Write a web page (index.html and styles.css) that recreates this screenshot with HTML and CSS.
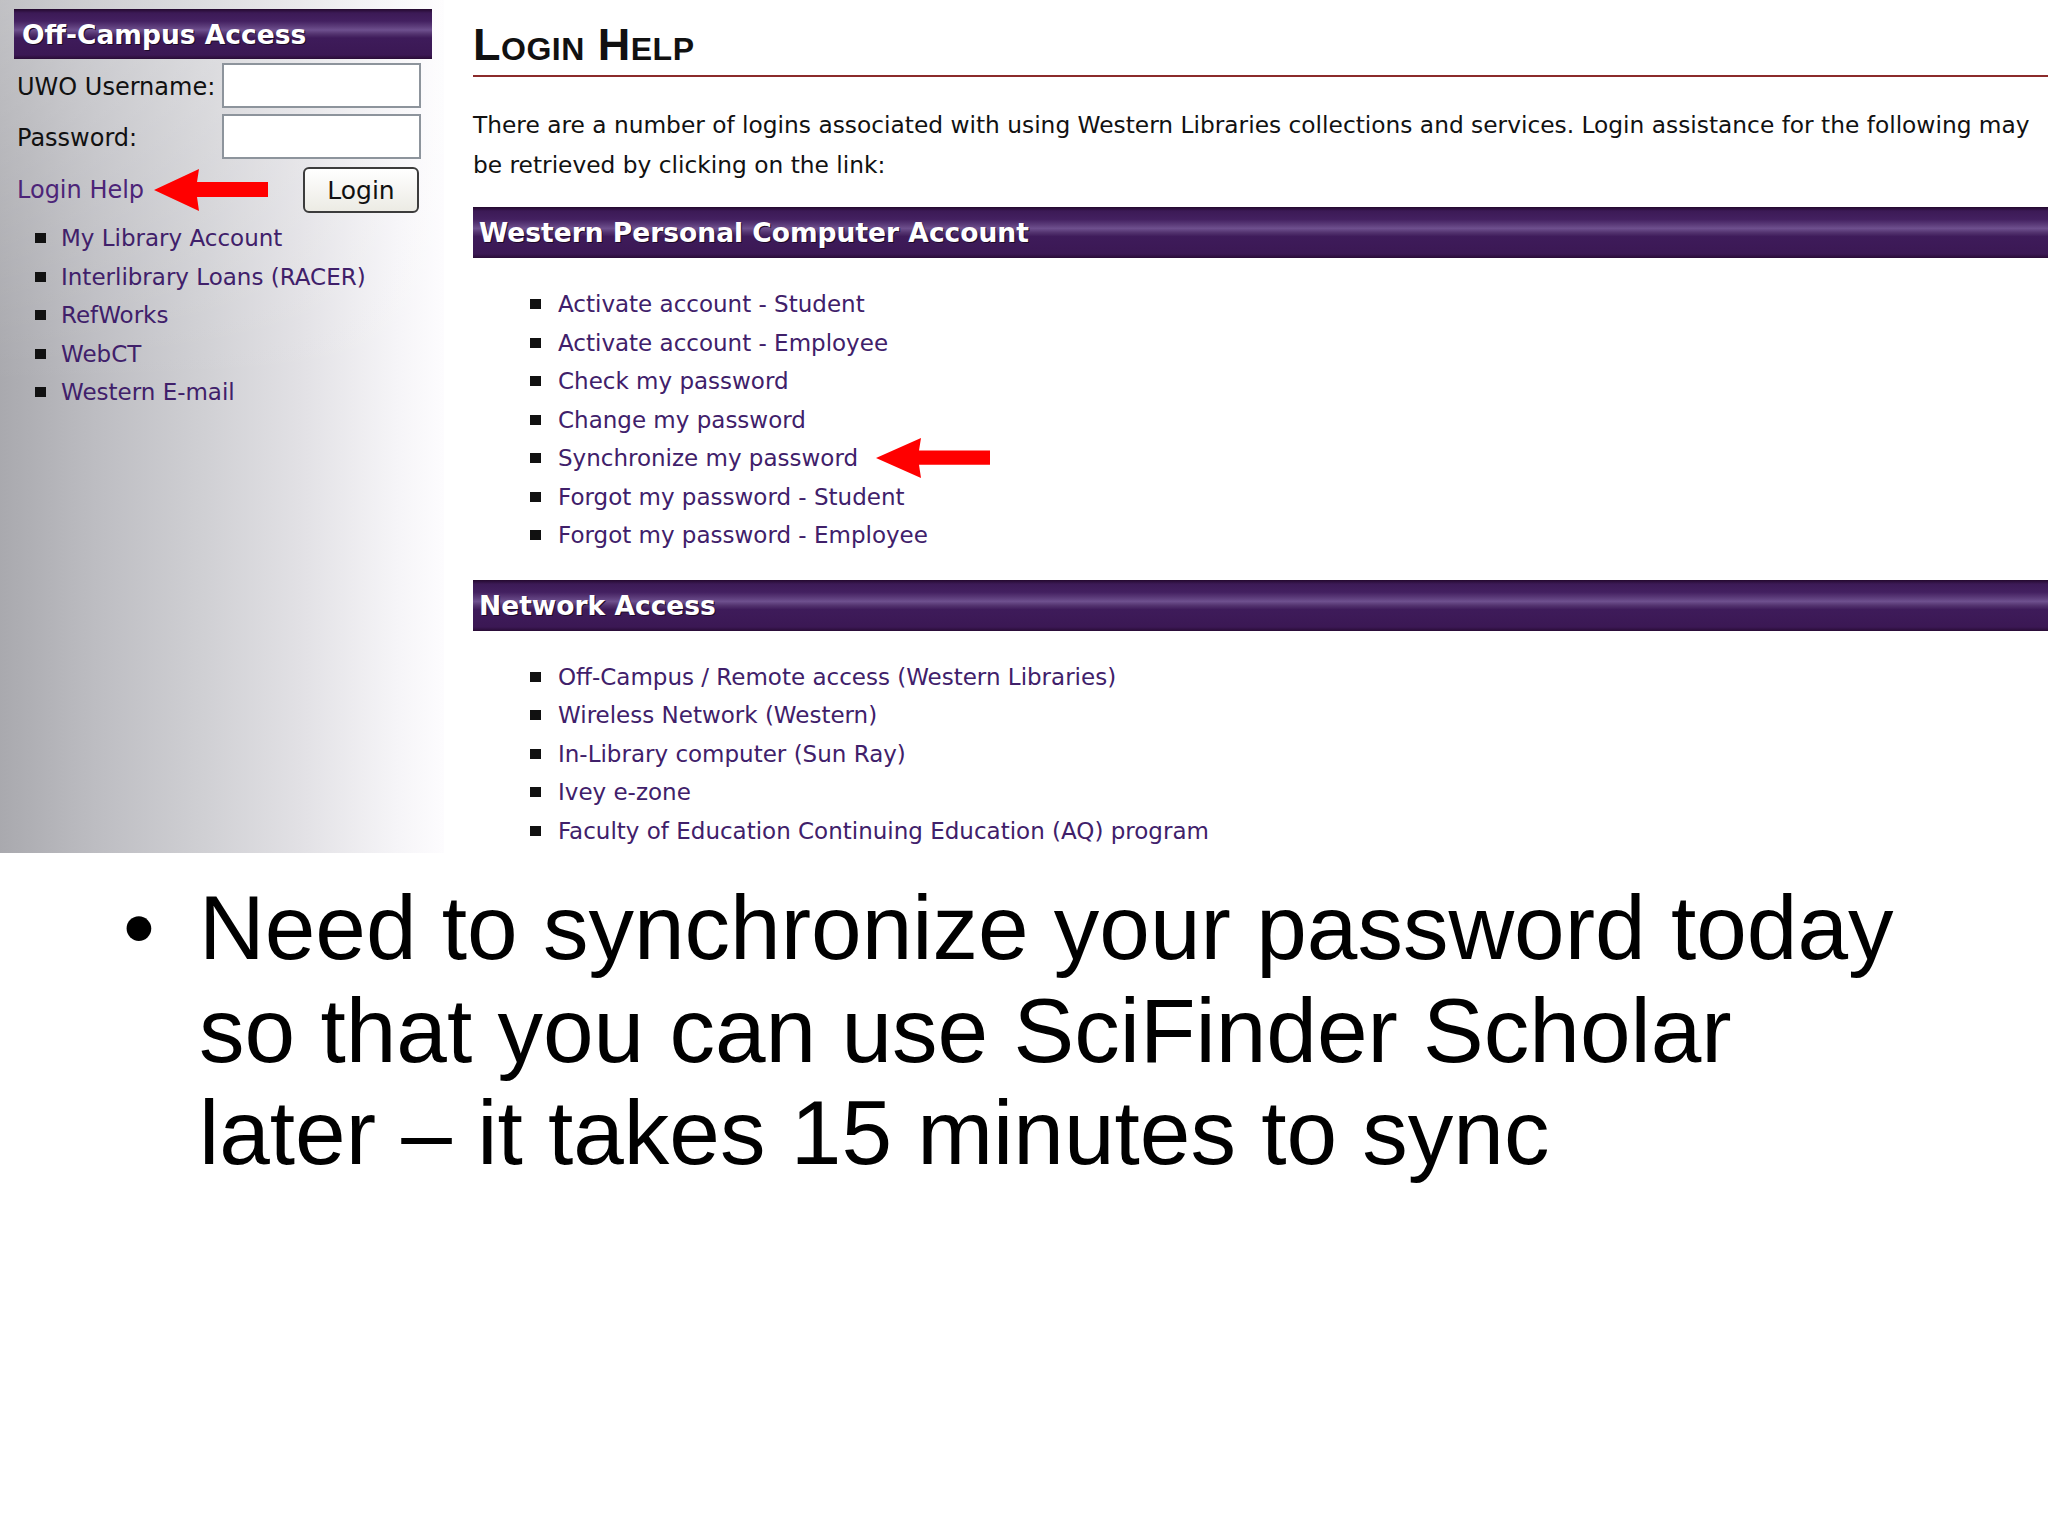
FILE: index.html
```html
<!DOCTYPE html>
<html lang="en">
<head>
    <meta charset="UTF-8">
    <title>Login Help - Synchronize your password</title>
    <link rel="stylesheet" href="styles.css">
</head>
<body>
    <div class="shot">
        <aside class="sidebar">
            <div class="bar side-title">Off-Campus Access</div>
            <form class="login">
                <span class="label">UWO Username:</span>
                <input type="text" class="field">
                <span class="label">Password:</span>
                <input type="password" class="field">
                <div class="login-row">
                    <a href="#" class="help-link">Login Help</a>
                    <svg class="arrow" width="114" height="42" viewBox="0 0 114 42"><path d="M0 21 L45 0 L43 13 L114 13 L114 28 L43 28 L45 42 Z" fill="#ff0000"/></svg>
                    <button type="button" class="login-btn">Login</button>
                </div>
            </form>
            <ul class="links side-links">
                <li><a href="#">My Library Account</a></li>
                <li><a href="#">Interlibrary Loans (RACER)</a></li>
                <li><a href="#">RefWorks</a></li>
                <li><a href="#">WebCT</a></li>
                <li><a href="#">Western E-mail</a></li>
            </ul>
        </aside>

        <main class="content">
            <h1>Login Help</h1>
            <p class="intro">There are a number of logins associated with using Western Libraries collections and services. Login assistance for the following may be retrieved by clicking on the link:</p>

            <h2 class="bar section-bar">Western Personal Computer Account</h2>
            <ul class="links help-links">
                <li><a href="#">Activate account - Student</a></li>
                <li><a href="#">Activate account - Employee</a></li>
                <li><a href="#">Check my password</a></li>
                <li><a href="#">Change my password</a></li>
                <li><a href="#">Synchronize my password</a><svg class="arrow arrow-sync" width="114" height="40" viewBox="0 0 114 42" preserveAspectRatio="none"><path d="M0 21 L45 0 L43 13 L114 13 L114 28 L43 28 L45 42 Z" fill="#ff0000"/></svg></li>
                <li><a href="#">Forgot my password - Student</a></li>
                <li><a href="#">Forgot my password - Employee</a></li>
            </ul>

            <h2 class="bar section-bar second">Network Access</h2>
            <ul class="links help-links">
                <li><a href="#">Off-Campus / Remote access (Western Libraries)</a></li>
                <li><a href="#">Wireless Network (Western)</a></li>
                <li><a href="#">In-Library computer (Sun Ray)</a></li>
                <li><a href="#">Ivey e-zone</a></li>
                <li><a href="#">Faculty of Education Continuing Education (AQ) program</a></li>
            </ul>
        </main>
    </div>

    <ul class="points">
        <li><span>Need to synchronize your password today so that you can use SciFinder Scholar later &ndash; it takes 15 minutes to sync</span></li>
    </ul>
</body>
</html>
```

FILE: styles.css
```css
body {
    margin: 0;
    background: #fff;
    color: #111;
    font-family: "DejaVu Sans", sans-serif;
}

/* screenshot of the library page */
.shot {
    display: flex;
    height: 853px;
    overflow: hidden;
}

.sidebar {
    width: 444px;
    flex: none;
    background:
        linear-gradient(to bottom, rgba(255,255,255,0.28) 0%, rgba(255,255,255,0) 45%),
        linear-gradient(to right, #a9a9ae 0%, #bebec3 23%, #cfcfd3 45%, #e2e1e5 68%, #f6f5f8 90%, #fdfcfe 100%);
}

.bar {
    display: flex;
    align-items: center;
    box-sizing: border-box;
    margin: 0;
    color: #fff;
    font-family: "DejaVu Sans", sans-serif;
    font-weight: bold;
    font-size: 26.5px;
    text-shadow: 1px 1px 0 #1e0a28;
    background: linear-gradient(to bottom,
        #24092e 0%,
        #3c1a56 8%,
        #432060 24%,
        #5a3a78 34%,
        #6e508e 42%,
        #53336f 50%,
        #3e1b5a 58%,
        #3b1854 92%,
        #290c36 100%);
}

.side-title {
    height: 50px;
    margin: 9px 12px 0 14px;
    padding-left: 8px;
}

.login {
    display: grid;
    grid-template-columns: 205px 199px;
    row-gap: 6px;
    align-items: center;
    margin: 4px 0 0 17px;
}

.label {
    font-size: 24px;
    padding-top: 3px;
}

.field {
    box-sizing: border-box;
    height: 45px;
    margin: 0;
    border: 2px solid #8d949c;
    background: #fff;
}

.login-row {
    grid-column: 1 / -1;
    display: flex;
    align-items: center;
    margin-top: 2px;
}

.help-link {
    font-size: 24px;
    color: #4c2478;
    text-decoration: none;
}

.arrow {
    display: block;
    flex: none;
    margin-left: 10px;
}

.login-btn {
    width: 116px;
    height: 46px;
    margin: 0 2px 0 auto;
    border: 2px solid #3c3c3c;
    border-radius: 6px;
    background: linear-gradient(#ffffff, #ecebe4);
    color: #111;
    font-family: "DejaVu Sans", sans-serif;
    font-size: 25px;
}

.links {
    list-style: none;
    margin: 0;
}

.links li {
    display: flex;
    align-items: center;
    height: 38.5px;
    font-size: 23px;
}

.links li::before {
    content: "";
    flex: none;
    width: 11px;
    height: 10px;
    background: #111;
}

.links a {
    color: #40206a;
    text-decoration: none;
}

.side-links {
    margin-top: 6px;
    padding-left: 35px;
}

.side-links li::before {
    margin-right: 15px;
}

.content {
    flex: 1;
    min-width: 0;
    padding-left: 29px;
}

h1 {
    margin: 0;
    padding: 23px 0 8px;
    border-bottom: 2px solid #8b2b2b;
    font-family: "Liberation Sans", sans-serif;
    font-size: 45px;
    font-weight: bold;
    font-variant: small-caps;
    letter-spacing: 0.5px;
    line-height: 44px;
}

.intro {
    margin: 28px 0 0;
    font-size: 23.3px;
    line-height: 40px;
}

.section-bar {
    height: 51px;
    margin-top: 22px;
    padding-left: 6px;
}

.section-bar.second {
    margin-top: 25px;
}

.help-links {
    margin-top: 27px;
    padding-left: 57px;
}

.help-links li::before {
    margin-right: 17px;
}

.arrow-sync {
    margin-left: 18px;
}

/* slide bullet below the screenshot */
.points {
    list-style: none;
    margin: 24px 0 0;
    padding: 0 0 0 123px;
    font-family: "Liberation Sans", sans-serif;
    font-size: 91px;
    line-height: 102.5px;
    color: #000;
}

.points li {
    display: grid;
    grid-template-columns: 76px 18.8em;
}

.points li::before {
    content: "\2022";
}
```
